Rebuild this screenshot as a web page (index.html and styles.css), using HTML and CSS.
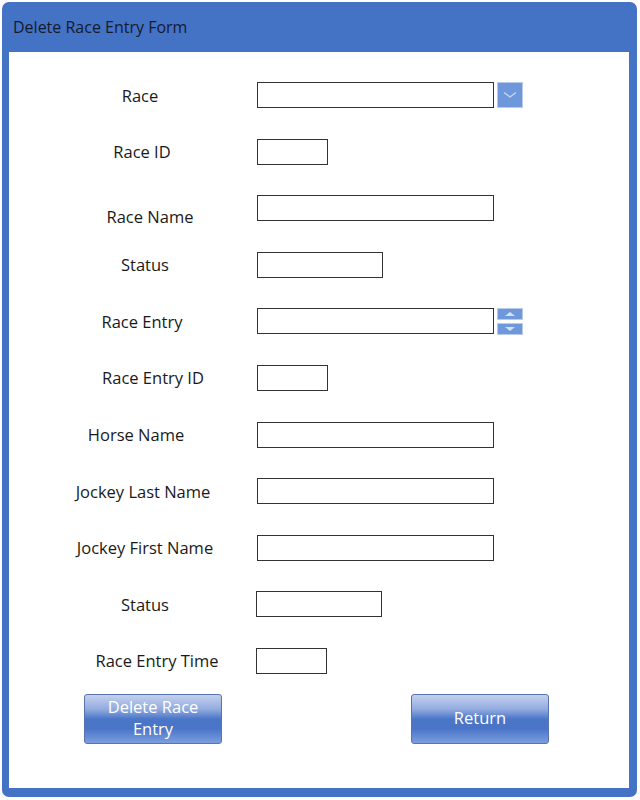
FILE: index.html
```html
<!DOCTYPE html>
<html>
<head>
<meta charset="utf-8">
<link rel="stylesheet" href="styles.css">
</head>
<body>
<div class="frame">
  <div class="titlebar">Delete Race Entry Form</div>
  <div class="content">
    <div class="form">
      <div class="row"><span class="label nudge-l2">Race</span><span class="field wide"></span><span class="dropbtn"><svg width="14" height="8" viewBox="0 0 14 8"><path d="M1 1.5 L7 6 L13 1.5" fill="none" stroke="#c9d7f2" stroke-width="1.3"/></svg></span></div>
      <div class="row"><span class="label">Race ID</span><span class="field short"></span></div>
      <div class="row"><span class="label low nudge-r8">Race Name</span><span class="field wide"></span></div>
      <div class="row"><span class="label nudge-r3">Status</span><span class="field mid"></span></div>
      <div class="row"><span class="label">Race Entry</span><span class="field wide"></span><span class="spin"><span class="spinbtn"><svg width="12" height="6" viewBox="0 0 12 6"><path d="M1 5 L6 1 L11 5 Z" fill="#d6e1f5"/></svg></span><span class="spinbtn"><svg width="12" height="6" viewBox="0 0 12 6"><path d="M1 1 L6 5 L11 1 Z" fill="#d6e1f5"/></svg></span></span></div>
      <div class="row"><span class="label nudge-r11">Race Entry ID</span><span class="field short"></span></div>
      <div class="row"><span class="label nudge-l6">Horse Name</span><span class="field wide"></span></div>
      <div class="row"><span class="label nudge-r1">Jockey Last Name</span><span class="field wide"></span></div>
      <div class="row"><span class="label nudge-r3">Jockey First Name</span><span class="field wide"></span></div>
      <div class="row shift"><span class="label nudge-r3">Status</span><span class="field mid"></span></div>
      <div class="row shift"><span class="label nudge-r15">Race Entry Time</span><span class="field short"></span></div>
    </div>
    <div class="buttons">
      <button class="btn">Delete Race<br>Entry</button>
      <button class="btn">Return</button>
    </div>
  </div>
</div>
</body>
</html>
```
FILE: styles.css
```css
html, body {
  margin: 0;
  padding: 0;
  background: #ffffff;
}
body {
  font-family: "Open Sans", "Noto Sans", sans-serif;
  color: #1a1a1a;
}
.frame {
  margin: 2px 0 0 2px;
  width: 635px;
  height: 795px;
  box-sizing: border-box;
  background: #4472c4;
  border-radius: 7px;
  padding: 0 8px 9px 7px;
  display: flex;
  flex-direction: column;
}
.titlebar {
  height: 50px;
  flex: none;
  display: flex;
  align-items: center;
  padding-left: 4px;
  padding-bottom: 1px;
  box-sizing: border-box;
  font-size: 16px;
  color: #141b2e;
}
.content {
  flex: 1;
  background: #ffffff;
  padding-top: 30px;
  box-sizing: border-box;
}
.form {
  display: flex;
  flex-direction: column;
  gap: 30.6px;
}
.row {
  display: flex;
  align-items: center;
  height: 26px;
  padding-left: 55px;
}
.label {
  width: 156px;
  box-sizing: border-box;
  flex: none;
  text-align: center;
  font-size: 16.5px;
  color: #1a1a1a;
  margin-right: 37px;
}
.label.low { padding-top: 16px; }
.nudge-r1 { padding-left: 2px; }
.nudge-r3 { padding-left: 6px; }
.nudge-r8 { padding-left: 16px; }
.nudge-r11 { padding-left: 22px; }
.nudge-r15 { padding-left: 30px; }
.nudge-l2 { padding-right: 4px; }
.nudge-l6 { padding-right: 12px; }
.field {
  height: 26px;
  box-sizing: border-box;
  border: 1px solid #333333;
  background: #ffffff;
}
.row.shift .field {
  margin-left: -1px;
}
.wide { width: 237px; }
.mid { width: 126px; }
.short { width: 71px; }
.dropbtn {
  margin-left: 3px;
  width: 26px;
  height: 26px;
  box-sizing: border-box;
  background: #6f97dc;
  border: 1px solid #b9cbed;
  display: flex;
  align-items: center;
  justify-content: center;
}
.spin {
  margin-left: 3px;
  display: flex;
  flex-direction: column;
  gap: 3px;
}
.spinbtn {
  width: 26px;
  height: 12px;
  box-sizing: border-box;
  background: #6f97dc;
  border: 1px solid #b9cbed;
  display: flex;
  align-items: center;
  justify-content: center;
}
.buttons {
  display: flex;
  justify-content: space-between;
  padding: 20px 80px 0 75px;
}
.btn {
  width: 138px;
  height: 50px;
  box-sizing: border-box;
  border: 1px solid #5773b0;
  border-radius: 3px;
  background: linear-gradient(to bottom, #c4d1ec 0%, #91aadf 30%, #4b76c8 50%, #4a74c6 70%, #7c9ee0 100%);
  color: #ffffff;
  font-family: "Open Sans", "Noto Sans", sans-serif;
  font-size: 16.5px;
  line-height: 22px;
  padding: 0 0 2px 0;
}
```
